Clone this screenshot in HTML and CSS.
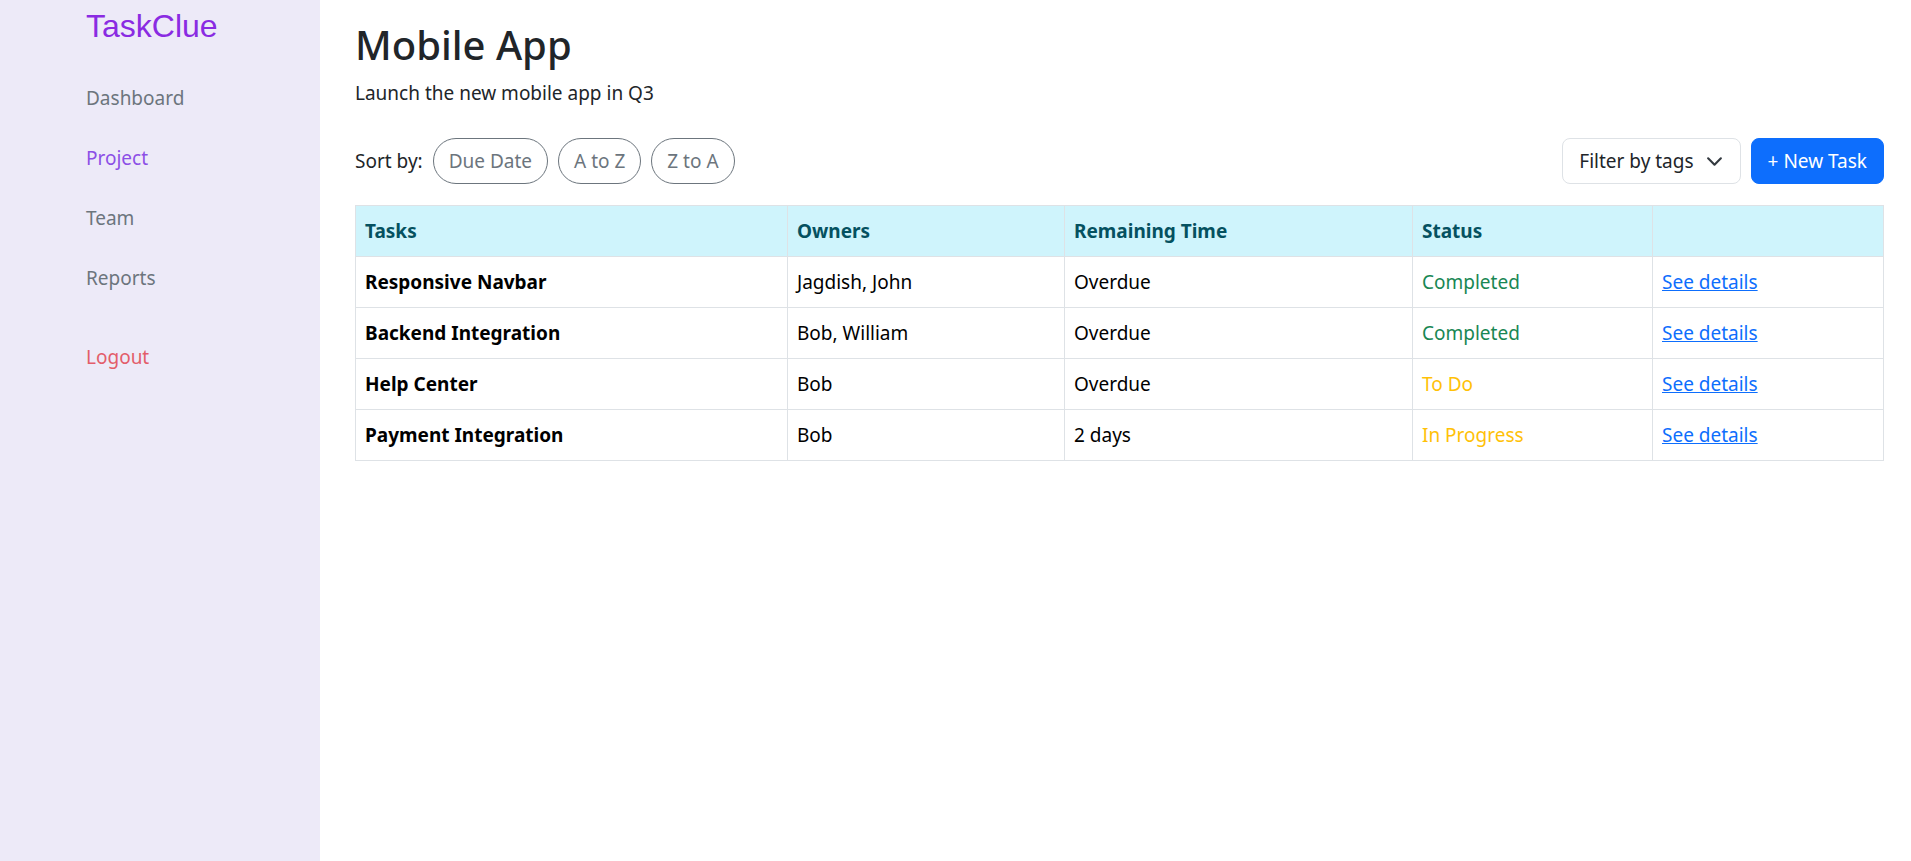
FILE: index.html
```html
<!DOCTYPE html>
<html lang="en">
<head>
<meta charset="utf-8">
<title>TaskClue - Mobile App</title>
<link rel="stylesheet" href="styles.css">
</head>
<body>
<div class="layout">
  <aside class="sidebar">
    <div class="logo">TaskClue</div>
    <nav class="nav">
      <a class="nav-link" href="#">Dashboard</a>
      <a class="nav-link active" href="#">Project</a>
      <a class="nav-link" href="#">Team</a>
      <a class="nav-link" href="#">Reports</a>
      <a class="nav-link logout" href="#">Logout</a>
    </nav>
  </aside>
  <main class="main">
    <h1 class="title">Mobile App</h1>
    <p class="subtitle">Launch the new mobile app in Q3</p>
    <div class="toolbar">
      <div class="sort">
        <span class="sort-label">Sort by:</span>
        <button class="pill">Due Date</button>
        <button class="pill">A to Z</button>
        <button class="pill">Z to A</button>
      </div>
      <div class="actions">
        <button class="select">Filter by tags
          <svg class="chev" viewBox="0 0 16 16" width="16" height="16"><path d="M2 5l6 6 6-6" fill="none" stroke="#343a40" stroke-width="2" stroke-linecap="round" stroke-linejoin="round"/></svg>
        </button>
        <button class="btn-primary">+ New Task</button>
      </div>
    </div>
    <table class="tasks">
      <thead>
        <tr>
          <th class="c-task">Tasks</th>
          <th class="c-owner">Owners</th>
          <th class="c-time">Remaining Time</th>
          <th class="c-status">Status</th>
          <th class="c-link"></th>
        </tr>
      </thead>
      <tbody>
        <tr>
          <td class="task-name">Responsive Navbar</td>
          <td>Jagdish, John</td>
          <td>Overdue</td>
          <td class="st-done">Completed</td>
          <td><a href="#">See details</a></td>
        </tr>
        <tr>
          <td class="task-name">Backend Integration</td>
          <td>Bob, William</td>
          <td>Overdue</td>
          <td class="st-done">Completed</td>
          <td><a href="#">See details</a></td>
        </tr>
        <tr>
          <td class="task-name">Help Center</td>
          <td>Bob</td>
          <td>Overdue</td>
          <td class="st-warn">To Do</td>
          <td><a href="#">See details</a></td>
        </tr>
        <tr>
          <td class="task-name">Payment Integration</td>
          <td>Bob</td>
          <td>2 days</td>
          <td class="st-warn">In Progress</td>
          <td><a href="#">See details</a></td>
        </tr>
      </tbody>
    </table>
  </main>
</div>
</body>
</html>
```

FILE: styles.css
```css
* { box-sizing: border-box; }
html, body { margin: 0; padding: 0; }
body {
  font-family: "Noto Sans", "Open Sans", sans-serif;
  font-size: 19px;
  line-height: 30px;
  color: #212529;
  background: #fff;
}
.layout {
  display: flex;
  min-height: 100vh;
}
.sidebar {
  width: 320px;
  flex: 0 0 320px;
  background: #edeaf8;
  padding: 8px 0 0 86px;
}
.logo {
  font-family: "Liberation Sans", Arial, sans-serif;
  font-size: 32px;
  line-height: 36px;
  color: #8a2be2;
}
.nav {
  display: flex;
  flex-direction: column;
  margin-top: 24px;
}
.nav-link {
  display: block;
  padding: 15px 0;
  color: #6c757d;
  text-decoration: none;
}
.nav-link.active { color: #8c4fe6; }
.nav-link.logout { color: #e35d6a; margin-top: 19px; }

.main {
  flex: 1;
  padding: 21px 27px 0 35px;
}
.title {
  margin: 0 0 9px;
  font-size: 40px;
  line-height: 48px;
  font-weight: 500;
  color: #212529;
}
.subtitle { margin: 0 0 30px; }
.toolbar {
  display: flex;
  justify-content: space-between;
  align-items: center;
  margin-bottom: 21px;
}
.sort, .actions {
  display: flex;
  align-items: center;
  gap: 10px;
}
button {
  font-family: inherit;
  font-size: 19px;
  line-height: 30px;
  cursor: pointer;
}
.pill {
  background: #fff;
  border: 1px solid #6c757d;
  color: #6c757d;
  border-radius: 999px;
  padding: 7px 15px;
}
.select {
  display: flex;
  align-items: center;
  background: #fff;
  border: 1px solid #dee2e6;
  border-radius: 8px;
  color: #212529;
  padding: 7px 17px 7px 16px;
  gap: 12px;
}
.chev { width: 17px; height: 17px; }
.btn-primary {
  background: #0d6efd;
  border: 1px solid #0d6efd;
  color: #fff;
  border-radius: 8px;
  padding: 7px 16px;
}
.tasks {
  width: 100%;
  border-collapse: collapse;
  table-layout: fixed;
}
.tasks th, .tasks td {
  border: 1px solid #dee2e6;
  padding: 10px 9px;
  text-align: left;
  color: #000;
}
.tasks th {
  background: #cff4fc;
  color: #055160;
  font-weight: 700;
}
.c-task { width: 432px; }
.c-owner { width: 277px; }
.c-time { width: 348px; }
.c-status { width: 240px; }
.tasks td.task-name { font-weight: 700; }
.tasks td.st-done { color: #198754; }
.tasks td.st-warn { color: #ffc107; }
.tasks a { color: #0d6efd; text-decoration: underline; }
```
